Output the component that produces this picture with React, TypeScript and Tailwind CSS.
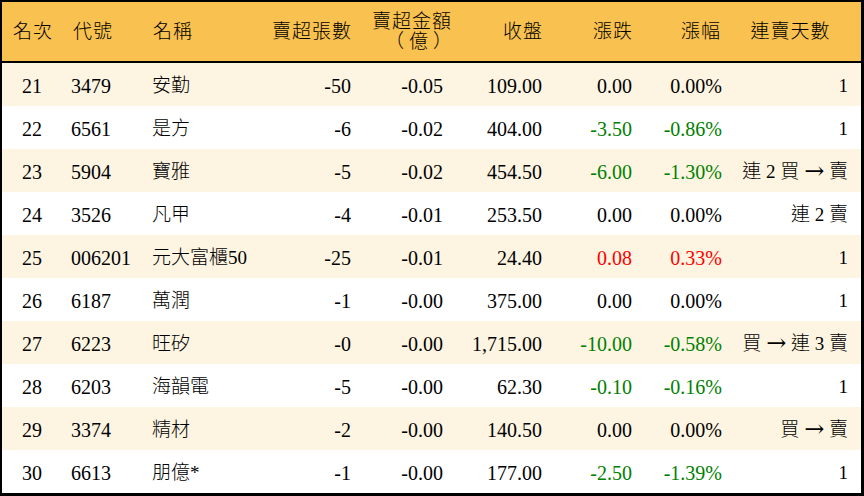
import React from "react";

type Row = {
  rank: string;
  code: string;
  name: string;
  qty: string;
  amt: string;
  close: string;
  chg: string;
  pct: string;
  days: string;
  color: "black" | "green" | "red";
};

const rows: Row[] = [
  { rank: "21", code: "3479", name: "安勤", qty: "-50", amt: "-0.05", close: "109.00", chg: "0.00", pct: "0.00%", days: "1", color: "black" },
  { rank: "22", code: "6561", name: "是方", qty: "-6", amt: "-0.02", close: "404.00", chg: "-3.50", pct: "-0.86%", days: "1", color: "green" },
  { rank: "23", code: "5904", name: "寶雅", qty: "-5", amt: "-0.02", close: "454.50", chg: "-6.00", pct: "-1.30%", days: "連 2 買 → 賣", color: "green" },
  { rank: "24", code: "3526", name: "凡甲", qty: "-4", amt: "-0.01", close: "253.50", chg: "0.00", pct: "0.00%", days: "連 2 賣", color: "black" },
  { rank: "25", code: "006201", name: "元大富櫃50", qty: "-25", amt: "-0.01", close: "24.40", chg: "0.08", pct: "0.33%", days: "1", color: "red" },
  { rank: "26", code: "6187", name: "萬潤", qty: "-1", amt: "-0.00", close: "375.00", chg: "0.00", pct: "0.00%", days: "1", color: "black" },
  { rank: "27", code: "6223", name: "旺矽", qty: "-0", amt: "-0.00", close: "1,715.00", chg: "-10.00", pct: "-0.58%", days: "買 → 連 3 賣", color: "green" },
  { rank: "28", code: "6203", name: "海韻電", qty: "-5", amt: "-0.00", close: "62.30", chg: "-0.10", pct: "-0.16%", days: "1", color: "green" },
  { rank: "29", code: "3374", name: "精材", qty: "-2", amt: "-0.00", close: "140.50", chg: "0.00", pct: "0.00%", days: "買 → 賣", color: "black" },
  { rank: "30", code: "6613", name: "朋億*", qty: "-1", amt: "-0.00", close: "177.00", chg: "-2.50", pct: "-1.39%", days: "1", color: "green" },
];

const colorClass = {
  black: "text-black",
  green: "text-[#008000]",
  red: "text-[#ff0000]",
};

function Days({ text }: { text: string }) {
  const parts = text.split("→");
  if (parts.length === 1) return <>{text}</>;
  return (
    <>
      {parts[0]}
      <span style={{ fontFamily: '"DejaVu Serif", serif' }} className="inline-block text-[24px] leading-[20px] align-[-1px]">
        →
      </span>
      {parts[1]}
    </>
  );
}

export default function App() {
  return (
    <div
      className="w-[864px] h-[496px] bg-white text-black border-l-2 border-t-2 border-r-[3px] border-b-[3px] border-black box-border overflow-hidden font-light"
      style={{ fontFamily: '"Liberation Serif", "Noto Sans CJK TC", serif' }}
    >
      <div className="flex h-[61px] items-center bg-[#f9c14f] border-b-2 border-black text-[19px] leading-[19px] tracking-[1px] whitespace-nowrap">
        <div className="w-[62px] text-center">名次</div>
        <div className="w-[86px] pl-[9px]">代號</div>
        <div className="w-[110px] pl-[3px]">名稱</div>
        <div className="w-[101px] text-right pr-[9px]">賣超張數</div>
        <div className="w-[92px] pl-[10px] text-center leading-[20px] pt-[1px]">
          <div>賣超金額</div>
          <div className="tracking-[5px] pl-[14px]">（億）</div>
        </div>
        <div className="w-[99px] text-right pr-[9px]">收盤</div>
        <div className="w-[90px] text-right pr-[9px]">漲跌</div>
        <div className="w-[90px] text-right pr-[11px]">漲幅</div>
        <div className="w-[129px] text-center pr-[12px]">連賣天數</div>
      </div>
      {rows.map((r, i) => (
        <div
          key={r.rank}
          className={`flex h-[43px] items-center pt-[2px] text-[20px] leading-[20px] ${i % 2 === 0 ? "bg-[#fdf5e2]" : "bg-white"}`}
        >
          <div className="w-[62px] text-center pr-[2px]">{r.rank}</div>
          <div className="w-[86px] pl-[7px]">{r.code}</div>
          <div className="w-[110px] pl-[2px] text-[19px]">{r.name}</div>
          <div className="w-[101px] text-right pr-[10px]">{r.qty}</div>
          <div className="w-[92px] text-right pr-[10px]">{r.amt}</div>
          <div className="w-[99px] text-right pr-[10px]">{r.close}</div>
          <div className={`w-[90px] text-right pr-[10px] ${colorClass[r.color]}`}>{r.chg}</div>
          <div className={`w-[90px] text-right pr-[10px] ${colorClass[r.color]}`}>{r.pct}</div>
          <div className="w-[129px] text-right pr-[13px] whitespace-pre text-[19px]">
            <Days text={r.days} />
          </div>
        </div>
      ))}
    </div>
  );
}
